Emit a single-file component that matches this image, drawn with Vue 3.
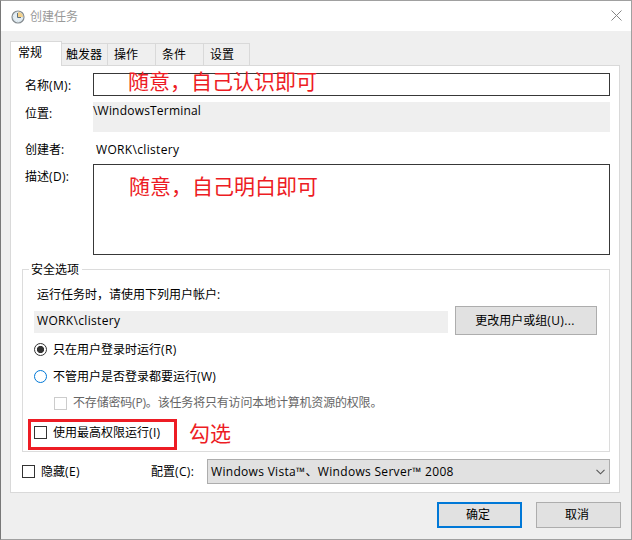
<script setup>
import { ref } from 'vue'

const tabs = ['常规', '触发器', '操作', '条件', '设置']
const activeTab = ref(0)
</script>

<template>
  <div class="window">
    <header class="titlebar">
      <svg class="clock" width="14" height="14" viewBox="0 0 14 14">
        <circle cx="7" cy="7" r="6" fill="#e4edf3" stroke="#858b8f" stroke-width="1.2" />
        <path d="M7 7V1.8A5.2 5.2 0 0 1 12.2 7Z" fill="#f5d18a" />
        <circle cx="7" cy="7" r="4.9" fill="none" stroke="#b9cbd5" stroke-width=".8" stroke-dasharray="1 1.5" />
        <path d="M6.5 3V7.5H10" fill="none" stroke="#60717d" stroke-width="1" />
      </svg>
      <span class="title">创建任务</span>
      <svg class="close" width="11" height="11" viewBox="0 0 11 11">
        <path d="M.5 .5L10.5 10.5M10.5 .5L.5 10.5" stroke="#858585" stroke-width="1" />
      </svg>
    </header>

    <main class="body">
      <nav class="tabs">
        <div
          v-for="(tab, i) in tabs"
          :key="tab"
          :class="['tab', `tab-${i}`, { active: i === activeTab }]"
          @click="activeTab = i"
        >{{ tab }}</div>
      </nav>

      <section class="panel">
        <div class="row name-row">
          <span class="label">名称<span class="key">(M):</span></span>
          <div class="field"><span class="note note-name">随意，自己认识即可</span></div>
        </div>
        <div class="row place-row">
          <span class="label">位置:</span>
          <div class="readonly"><span class="place">\WindowsTerminal</span></div>
        </div>
        <div class="row author-row">
          <span class="label">创建者:</span>
          <span class="author">WORK\clistery</span>
        </div>
        <div class="row desc-row">
          <span class="label">描述<span class="key">(D):</span></span>
          <div class="field area"><span class="note note-desc">随意，自己明白即可</span></div>
        </div>

        <div class="group">
          <span class="legend">安全选项</span>
          <div class="hint">运行任务时，请使用下列用户帐户:</div>
          <div class="account">
            <div class="readonly user"><span class="author">WORK\clistery</span></div>
            <div class="button change"><span>更改用户或组<span class="key">(U)...</span></span></div>
          </div>
          <div class="option radio-one"><i class="radio checked"></i><span>只在用户登录时运行<span class="key">(R)</span></span></div>
          <div class="option radio-two"><i class="radio hot"></i><span>不管用户是否登录都要运行<span class="key">(W)</span></span></div>
          <div class="option store"><i class="check disabled"></i><span>不存储密码(P)。该任务将只有访问本地计算机资源的权限。</span></div>
          <div class="option highest"><i class="check"></i><span>使用最高权限运行<span class="key">(I)</span></span></div>
          <div class="marker"></div>
          <span class="note note-check">勾选</span>
        </div>

        <div class="config">
          <i class="check"></i>
          <span class="hidden-label">隐藏<span class="key">(E)</span></span>
          <span class="config-label">配置<span class="key">(C):</span></span>
          <div class="select">
            <span class="system">Windows Vista™、Windows Server™ 2008</span>
            <svg width="9" height="6" viewBox="0 0 9 6">
              <path d="M.5 .8L4.5 4.8L8.5 .8" fill="none" stroke="#555" stroke-width="1.1" />
            </svg>
          </div>
        </div>
      </section>

      <footer class="footer">
        <div class="button ok">确定</div>
        <div class="button cancel">取消</div>
      </footer>
    </main>
  </div>
</template>

<style>
body { margin: 0; overflow: hidden; }
</style>

<style scoped>
* { box-sizing: border-box; }
.window {
  width: 632px;
  height: 540px;
  display: flex;
  flex-direction: column;
  background: #efefef;
  border: 1px solid #a0a0a0;
  border-left-color: #787878;
  color: #000;
  font: 12px/16px "Open Sans", "Noto Sans CJK SC", sans-serif;
  white-space: nowrap;
}
.titlebar {
  height: 30px;
  flex: none;
  display: flex;
  align-items: center;
  padding: 0 9px 0 10px;
  background: #fff;
  color: #999;
}
.clock { margin-right: 5px; margin-top: 1px; }
.title { padding-top: 2px; }
.close { margin-left: auto; margin-top: -2px; }
.body { padding: 10px 11px 0 9px; }
.tabs { height: 24px; display: flex; align-items: flex-end; }
.tab {
  height: 22px;
  padding: 3px 0 0 5px;
  border: 1px solid #d9d9d9;
  border-left: 0;
  border-bottom: 0;
}
.tab.active {
  height: 25px;
  margin-bottom: -1px;
  padding: 3px 0 0 7px;
  border-left: 1px solid #d9d9d9;
  background: #fff;
  position: relative;
  z-index: 1;
}
.tab-0 { width: 52px; }
.tab-1 { width: 46px; padding-left: 4px; }
.tab-2 { width: 48px; padding-left: 6px; }
.tab-3 { width: 48px; padding-left: 6px; }
.tab-4 { width: 46px; padding-left: 6px; }
.panel {
  height: 428px;
  padding: 7px 9px 0 11px;
  border: 1px solid #d9d9d9;
  background: #fff;
}
.row { display: flex; align-items: flex-start; }
.label { width: 71px; flex: none; padding-left: 3px; }
.key { letter-spacing: .35px; }
.place { letter-spacing: .2px; }
.author { letter-spacing: .33px; }
.system { letter-spacing: .31px; }
.name-row { height: 29px; }
.name-row .label { padding-top: 5px; }
.place-row { height: 38px; }
.place-row .label { padding-top: 4px; }
.author-row { height: 24px; }
.author-row > span { padding-top: 2px; }
.author-row .author { margin-left: 3px; }
.desc-row { height: 105px; }
.desc-row .label { padding-top: 5px; }
.field {
  position: relative;
  flex: 1;
  height: 23px;
  border: 1px solid #383838;
}
.area { height: 91px; }
.readonly { flex: 1; height: 30px; background: #efefef; line-height: 18px; }
.note {
  position: absolute;
  color: #ed1c24;
  font-size: 21px;
  line-height: 26px;
}
.note-name { left: 34px; top: -6px; }
.note-desc { left: 35px; top: 8px; }
.group {
  position: relative;
  height: 183px;
  border: 1px solid #dcdcdc;
}
.legend {
  position: absolute;
  left: 6px;
  top: -8px;
  padding: 0 3px 0 2px;
  background: #fff;
}
.hint { padding: 17px 0 0 14px; height: 36px; }
.account { height: 29px; display: flex; align-items: flex-start; padding-left: 11px; }
.user { flex: none; width: 414px; height: 22px; margin-top: 5px; padding-left: 3px; line-height: 19px; }
.button {
  display: flex;
  align-items: center;
  justify-content: center;
  border: 1px solid #adadad;
  background: #e1e1e1;
}
.change { width: 142px; height: 29px; margin-left: 7px; padding-right: 2px; }
.option { display: flex; align-items: center; height: 27px; padding-left: 11px; gap: 6px; }
.radio-one { margin-top: 1px; }
.store { padding-left: 31px; height: 26px; color: #666; letter-spacing: -.18px; }
.highest { height: 33px; }
.radio, .check {
  flex: none;
  width: 13px;
  height: 13px;
  border: 1px solid #333;
  background: #fff;
}
.radio { border-radius: 50%; }
.radio.checked { background: radial-gradient(circle, #333 3.2px, #fff 4px); }
.radio.hot { border-color: #0078d7; }
.check.disabled { border-color: #ccc; }
.marker {
  position: absolute;
  left: 5px;
  top: 149px;
  width: 149px;
  height: 31px;
  border: 3px solid #ed1c24;
}
.note-check { left: 166px; top: 150px; }
.config { display: flex; align-items: center; height: 39px; }
.hidden-label { width: 110px; padding-left: 6px; }
.config-label { width: 62px; padding-left: 6px; }
.select {
  flex: 1;
  height: 25px;
  display: flex;
  align-items: center;
  justify-content: space-between;
  padding: 0 4px 0 3px;
  border: 1px solid #adadad;
  background: #e1e1e1;
}
.footer { display: flex; justify-content: flex-end; gap: 14px; padding-top: 9px; }
.ok, .cancel { width: 85px; height: 26px; padding-right: 3px; }
.footer { margin-right: -1px; }
.ok { border: 2px solid #0078d7; }
</style>
